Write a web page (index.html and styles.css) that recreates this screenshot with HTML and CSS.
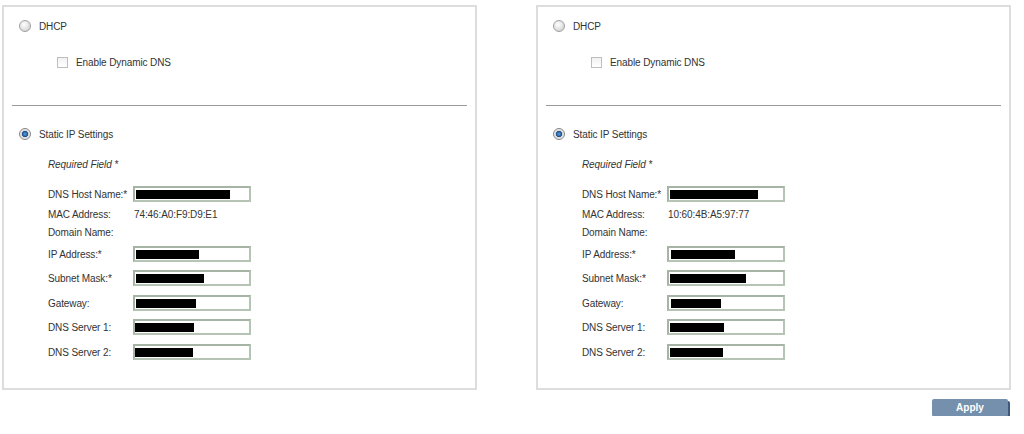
FILE: index.html
```html
<!DOCTYPE html>
<html>
<head>
<meta charset="utf-8">
<link rel="stylesheet" href="styles.css">
</head>
<body>
<div class="page">
  <div class="panels">
    <section class="panel">
      <div class="opt"><span class="radio"></span><span>DHCP</span></div>
      <div class="opt sub"><span class="check"></span><span>Enable Dynamic DNS</span></div>
      <div class="divider"></div>
      <div class="opt static"><span class="radio on"></span><span>Static IP Settings</span></div>
      <div class="form">
        <div class="req">Required Field *</div>
        <div class="field f-host"><span class="lbl">DNS Host Name:*</span><span class="box"><span class="mask" style="width:94px"></span></span></div>
        <div class="field f-mac"><span class="lbl">MAC Address:</span><span class="val">74:46:A0:F9:D9:E1</span></div>
        <div class="field f-dom"><span class="lbl">Domain Name:</span></div>
        <div class="field f-ip"><span class="lbl">IP Address:*</span><span class="box"><span class="mask" style="width:63px"></span></span></div>
        <div class="field f-in"><span class="lbl">Subnet Mask:*</span><span class="box"><span class="mask" style="width:68px"></span></span></div>
        <div class="field f-in2"><span class="lbl">Gateway:</span><span class="box"><span class="mask" style="width:60px"></span></span></div>
        <div class="field f-in"><span class="lbl">DNS Server 1:</span><span class="box"><span class="mask m0" style="width:59px"></span></span></div>
        <div class="field f-in2"><span class="lbl">DNS Server 2:</span><span class="box"><span class="mask m0" style="width:58px"></span></span></div>
      </div>
    </section>
    <section class="panel">
      <div class="opt"><span class="radio"></span><span>DHCP</span></div>
      <div class="opt sub"><span class="check"></span><span>Enable Dynamic DNS</span></div>
      <div class="divider"></div>
      <div class="opt static"><span class="radio on"></span><span>Static IP Settings</span></div>
      <div class="form">
        <div class="req">Required Field *</div>
        <div class="field f-host"><span class="lbl">DNS Host Name:*</span><span class="box"><span class="mask" style="width:88px"></span></span></div>
        <div class="field f-mac"><span class="lbl">MAC Address:</span><span class="val">10:60:4B:A5:97:77</span></div>
        <div class="field f-dom"><span class="lbl">Domain Name:</span></div>
        <div class="field f-ip"><span class="lbl">IP Address:*</span><span class="box"><span class="mask m2" style="width:64px"></span></span></div>
        <div class="field f-in"><span class="lbl">Subnet Mask:*</span><span class="box"><span class="mask" style="width:76px"></span></span></div>
        <div class="field f-in2"><span class="lbl">Gateway:</span><span class="box"><span class="mask m2" style="width:50px"></span></span></div>
        <div class="field f-in"><span class="lbl">DNS Server 1:</span><span class="box"><span class="mask" style="width:54px"></span></span></div>
        <div class="field f-in2"><span class="lbl">DNS Server 2:</span><span class="box"><span class="mask" style="width:53px"></span></span></div>
      </div>
    </section>
  </div>
  <div class="actions">
    <button class="apply" type="button">Apply</button>
  </div>
</div>
</body>
</html>
```

FILE: styles.css
```css
html, body {
  margin: 0;
  padding: 0;
  background: #ffffff;
}

body {
  font-family: "Liberation Sans", Arial, sans-serif;
  font-size: 10px;
  letter-spacing: -0.1px;
  color: #333333;
}

.page {
  width: 1024px;
  padding-top: 5px;
}

.panels {
  display: flex;
  gap: 59px;
  padding-left: 2px;
}

.panel {
  width: 471px;
  height: 370px;
  border: 2px solid #dddddd;
  padding-top: 11px;
  box-sizing: content-box;
  display: flex;
  flex-direction: column;
}

.opt {
  display: flex;
  align-items: center;
  height: 16px;
  padding-left: 16px;
  gap: 8px;
}

.opt.sub {
  margin-top: 20px;
  padding-left: 53px;
}

.opt.static {
  margin-top: 20px;
}

.divider {
  height: 1px;
  background: #9a9a9a;
  margin: 35px 8px 0 8px;
}

.radio {
  width: 12px;
  height: 12px;
  border-radius: 50%;
  box-sizing: border-box;
  border: 1px solid #a0a0a0;
  background: radial-gradient(circle at 40% 35%, #ffffff 0%, #e2e2e2 55%, #c4c4c4 100%);
  flex: none;
  margin-left: -1px;
}

.radio.on {
  border-color: #858585;
  background: radial-gradient(circle at 50% 50%, #5fa0de 0%, #2a66a8 30%, #1b4a80 40%, #d4d4d4 47%, #f4f4f4 75%, #cccccc 100%);
}

.check {
  width: 11px;
  height: 11px;
  box-sizing: border-box;
  border: 1px solid #bdbdbd;
  background: linear-gradient(#f2f2f2, #ffffff);
  flex: none;
}

.form {
  display: flex;
  flex-direction: column;
  padding-left: 44px;
}

.req {
  margin-top: 15px;
  height: 16px;
  line-height: 16px;
  font-style: italic;
}

.field {
  display: flex;
  align-items: center;
  height: 16px;
}

.f-host { margin-top: 13px; }
.f-mac { margin-top: 4px; }
.f-dom { margin-top: 2px; }
.f-ip { margin-top: 6px; }
.f-in { margin-top: 8px; }
.f-in2 { margin-top: 9px; }

.lbl {
  width: 85px;
  flex: none;
}

.val {
  padding-left: 1px;
}

.box {
  width: 118px;
  height: 16px;
  box-sizing: border-box;
  border: 2px solid #b6c4b6;
  border-top-color: #a6b4a6;
  border-left-color: #a6b4a6;
  background: #ffffff;
  display: flex;
  align-items: center;
  padding-left: 1px;
}

.mask {
  height: 9px;
  background: #000000;
}

.mask.m0 { margin-left: -1px; }
.mask.m2 { margin-left: 1px; }

.actions {
  display: flex;
  justify-content: flex-end;
  padding-right: 16px;
  margin-top: 9px;
}

.apply {
  width: 76px;
  height: 17px;
  padding: 0;
  border: none;
  background: #7590ad;
  box-shadow: 2px 2px 0 #3d5a7c;
  border-radius: 2px 2px 1px 1px;
  color: #ffffff;
  font-family: "Liberation Sans", Arial, sans-serif;
  font-size: 10px;
  font-weight: bold;
  line-height: 17px;
}
```
